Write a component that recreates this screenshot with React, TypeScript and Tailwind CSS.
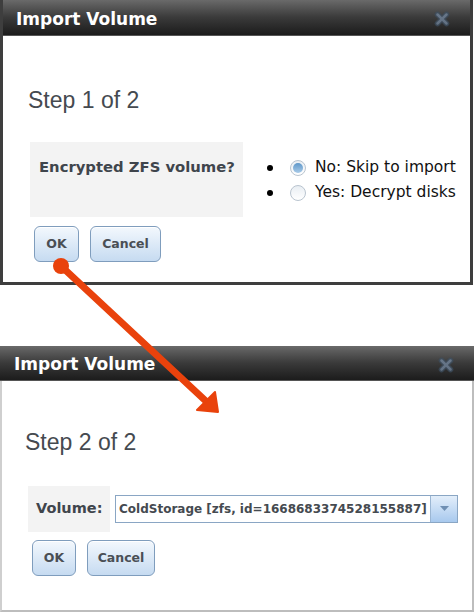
import React from "react";

const verdana = { fontFamily: '"DejaVu Sans", Verdana, sans-serif' };
const helv = { fontFamily: '"Liberation Sans", Arial, sans-serif' };

function CloseIcon() {
  return (
    <svg width="16" height="16" viewBox="0 0 16 16" opacity="0.75">
      <g stroke="#3e4f60" strokeWidth="5.5" strokeLinecap="round">
        <line x1="3.5" y1="3.5" x2="12.5" y2="12.5" />
        <line x1="12.5" y1="3.5" x2="3.5" y2="12.5" />
      </g>
      <g stroke="#7488a0" strokeWidth="2.5" strokeLinecap="round">
        <line x1="3.5" y1="3.5" x2="12.5" y2="12.5" />
        <line x1="12.5" y1="3.5" x2="3.5" y2="12.5" />
      </g>
    </svg>
  );
}

function TitleBar({ pl, h }: { pl: string; h: string }) {
  return (
    <div
      className={`${h} flex items-center justify-between ${pl} pr-[20px] pt-[3px] bg-gradient-to-b from-[#6a6a6a] via-[#3a3a3a] to-[#1c1c1c] border-b border-[#555]`}
    >
      <span className="text-white font-bold text-[17px] leading-none" style={verdana}>
        Import Volume
      </span>
      <CloseIcon />
    </div>
  );
}

function Btn({ children, w }: { children: React.ReactNode; w: string }) {
  return (
    <button
      className={`${w} h-[36px] rounded-[6px] border border-[#7f9dbd] bg-gradient-to-b from-[#f3f8fd] to-[#c6dbf1] text-[#4a4f55] font-bold text-[12.5px] shadow-[inset_0_1px_0_#fff]`}
      style={verdana}
    >
      {children}
    </button>
  );
}

function Radio({ checked }: { checked?: boolean }) {
  return (
    <span className="w-[16px] h-[16px] rounded-full border border-[#b9c4cf] bg-gradient-to-b from-[#e9eef3] to-[#ffffff] flex items-center justify-center">
      {checked && (
        <span className="w-[10px] h-[10px] rounded-full bg-gradient-to-b from-[#5e97c9] to-[#a9cbe8]" />
      )}
    </span>
  );
}

export default function App() {
  return (
    <div className="relative w-[474px] h-[612px] bg-white overflow-hidden">
      {/* Dialog 1 */}
      <div className="w-[473px] h-[285px] border-x-[3px] border-b-[3px] border-[#3e3e3e] bg-white flex flex-col">
        <TitleBar pl="pl-[13px]" h="h-[36px]" />
        <div className="pl-[25px] pt-[51px]">
          <div className="text-[23px] text-[#454a50] leading-[27px]" style={helv}>
            Step 1 of 2
          </div>
          <div className="flex mt-[28px]">
            <div className="w-[213px] h-[75px] bg-[#f3f3f3] pl-[9px] pt-[12px] ml-[2px]">
              <span className="font-bold text-[14.8px] text-[#3f454c]" style={verdana}>
                Encrypted ZFS volume?
              </span>
            </div>
            <div className="flex flex-col ml-[24px] pt-[17px] gap-[7px]" style={verdana}>
              <div className="flex items-center h-[18px]">
                <span className="w-[6px] h-[6px] rounded-full bg-black" />
                <span className="ml-[17px]"><Radio checked /></span>
                <span className="ml-[9px] text-[15.5px] text-[#111]">No: Skip to import</span>
              </div>
              <div className="flex items-center h-[18px]">
                <span className="w-[6px] h-[6px] rounded-full bg-black" />
                <span className="ml-[17px]"><Radio /></span>
                <span className="ml-[9px] text-[15.5px] text-[#111]">Yes: Decrypt disks</span>
              </div>
            </div>
          </div>
          <div className="flex gap-[11px] mt-[9px] ml-[6px]">
            <Btn w="w-[45px]">OK</Btn>
            <Btn w="w-[71px]">Cancel</Btn>
          </div>
        </div>
      </div>

      {/* Dialog 2 */}
      <div className="mt-[61px] w-[474px] h-[266px] border-l-[2px] border-r-[2px] border-b-[2px] border-l-[#cfcfcf] border-r-[#bdbdbd] border-b-[#bdbdbd] bg-white flex flex-col">
        <div className="-ml-[2px] -mr-[2px]">
          <TitleBar pl="pl-[14px]" h="h-[35px]" />
        </div>
        <div className="pl-[23px] pt-[48px]">
          <div className="text-[23px] text-[#454a50] leading-[27px]" style={helv}>
            Step 2 of 2
          </div>
          <div className="flex items-center mt-[30px] ml-[3px]">
            <div className="w-[82px] h-[46px] bg-[#f3f3f3] flex items-center pl-[8px]">
              <span className="font-bold text-[14.5px] text-[#3f454c]" style={verdana}>
                Volume:
              </span>
            </div>
            <div className="ml-[5px] w-[343px] h-[28px] border border-[#8aa6c4] flex bg-white">
              <div className="flex-1 flex items-center pl-[3px] font-bold text-[12px] text-[#454a50] whitespace-nowrap overflow-hidden" style={verdana}>
                ColdStorage [zfs, id=1668683374528155887]
              </div>
              <div className="w-[27px] h-full border-l border-[#9bb6d3] bg-gradient-to-b from-[#e3eefa] to-[#a8c9ee] flex items-center justify-center">
                <svg width="9" height="6" viewBox="0 0 9 6">
                  <path d="M0 0 H9 L4.5 5 Z" fill="#6f8fb3" />
                </svg>
              </div>
            </div>
          </div>
          <div className="flex gap-[11px] mt-[8px] ml-[7px]">
            <Btn w="w-[44px]">OK</Btn>
            <Btn w="w-[68px]">Cancel</Btn>
          </div>
        </div>
      </div>

      {/* Orange arrow overlay */}
      <svg className="absolute left-0 top-0 pointer-events-none" width="474" height="612" viewBox="0 0 474 612">
        <line x1="61" y1="266" x2="209" y2="404" stroke="#e9420c" strokeWidth="7" strokeLinecap="round" />
        <circle cx="61" cy="266" r="8" fill="#e9420c" />
        <path d="M218 412 L197 410 L215 392 Z" fill="#e9420c" stroke="#e9420c" strokeWidth="2" strokeLinejoin="round" />
      </svg>
    </div>
  );
}
